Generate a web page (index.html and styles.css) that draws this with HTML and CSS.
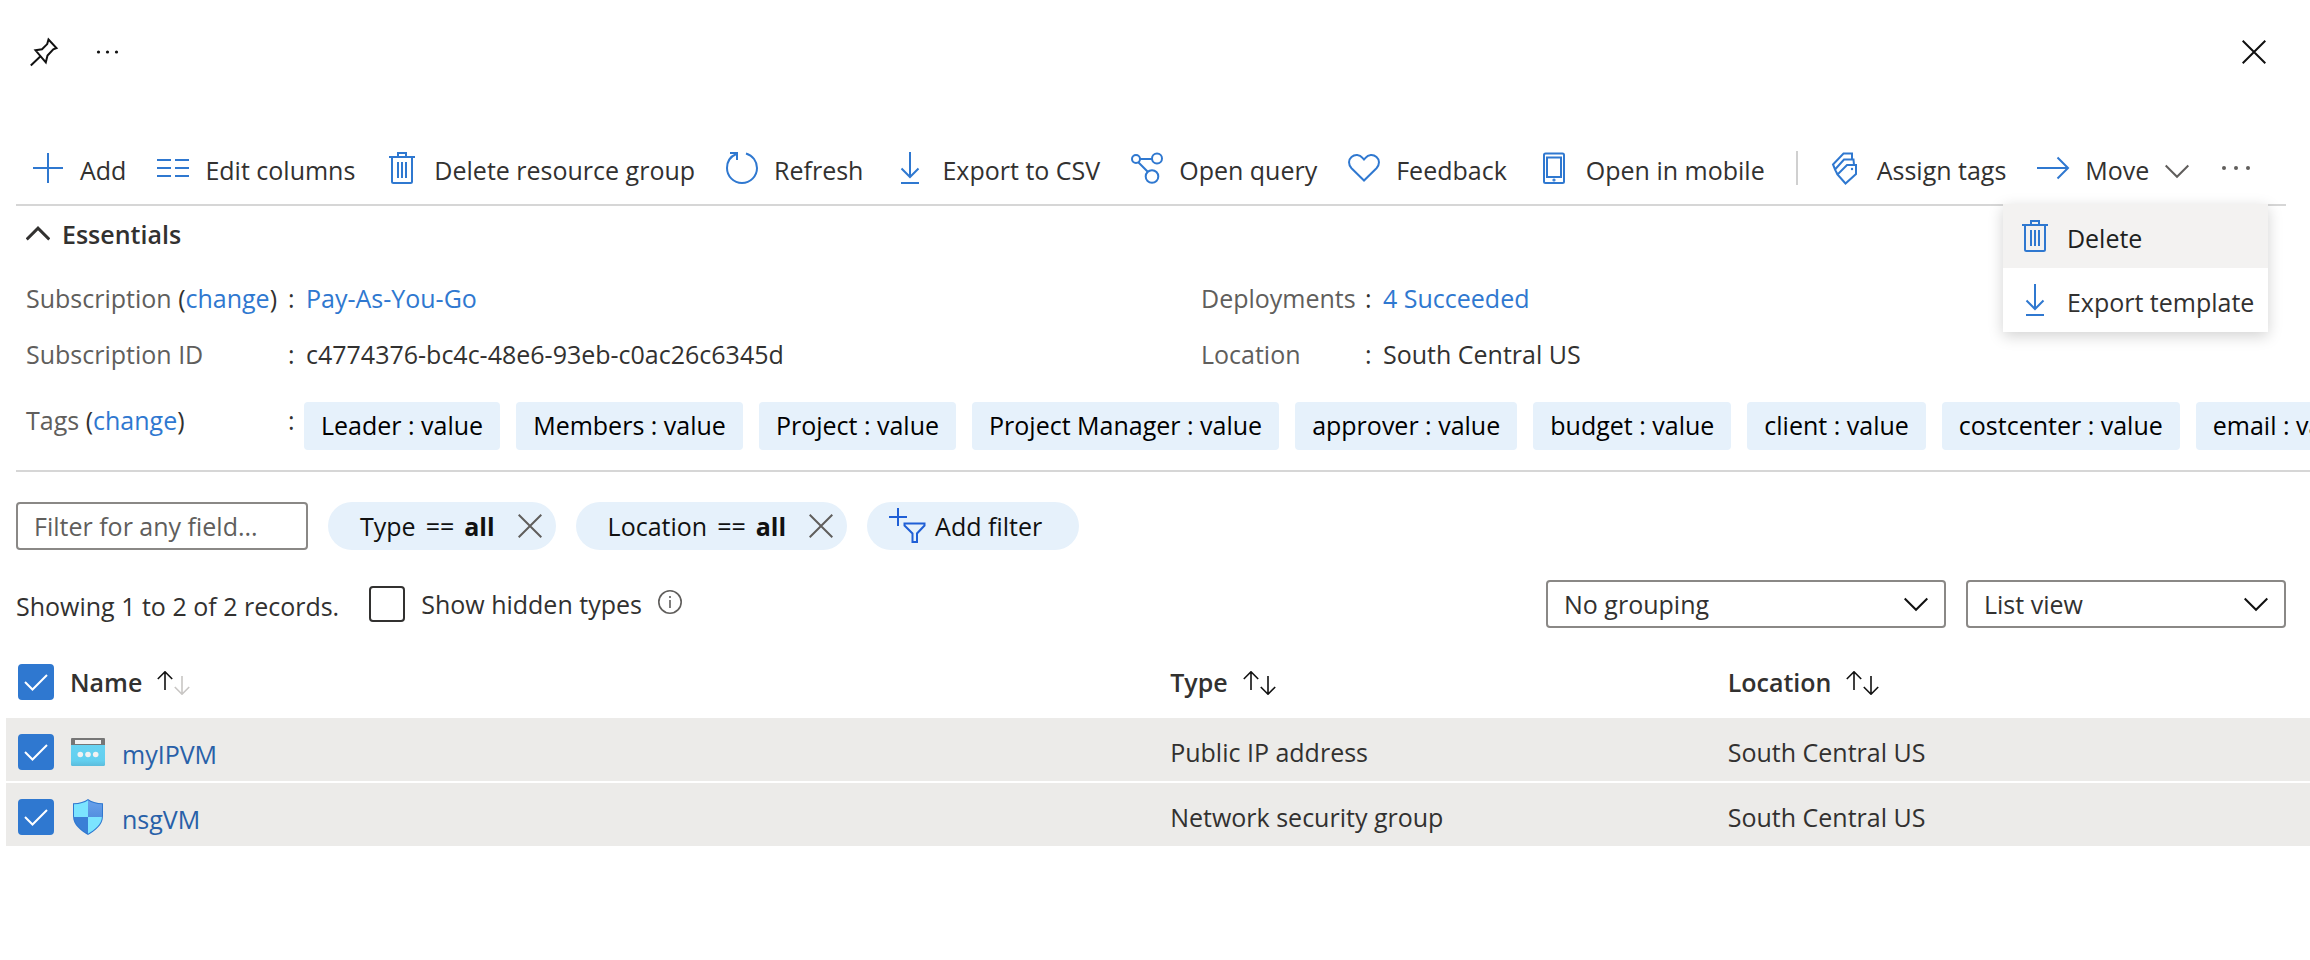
FILE: index.html
```html
<!DOCTYPE html>
<html lang="en">
<head>
<meta charset="utf-8">
<title>Resource group</title>
<link rel="stylesheet" href="styles.css">
</head>
<body>
<svg class="defs" aria-hidden="true">
  <symbol id="i-trash" viewBox="0 0 32 32"><path d="M3 5h26M12 5V1h8v4M6 5v24.500q0 1.500 1.500 1.500h17q1.500 0 1.500-1.500V5M12 10v16M16 10v16M20 10v16"/></symbol>
  <symbol id="i-download" viewBox="0 0 32 32"><path d="M16 0v25M7.500 16.500L16 25l8.500-8.500M7 31h18"/></symbol>
  <symbol id="i-x" viewBox="0 0 24 24"><path d="M.700.700l22.600 22.600M23.300.700L.700 23.300"/></symbol>
  <symbol id="i-chevron" viewBox="0 0 24 24"><path d="M.700 6.500L12 17.800 23.300 6.500"/></symbol>
  <symbol id="i-up" viewBox="0 0 16 24"><path d="M8 0.700v18.300M.800 8L8 .800 15.200 8"/></symbol>
  <symbol id="i-down" viewBox="0 0 16 24"><path d="M8 5v18.300M.800 16L8 23.200l7.200-7.200"/></symbol>
</svg>

<header class="blade-head">
  <button class="plain" aria-label="Pin">
    <svg class="icon28 dark" viewBox="0 0 28 28"><path d="M18.500 1.500l8 8.500-3.200 1.300-5.800 6.200-1.700 6.800-10.300-12 6.500-1 5.200-5.200zM10.500 18.300L.800 27.500"/></svg>
  </button>
  <button class="plain dots" aria-label="More">
    <svg class="icon28 dots-s" viewBox="0 0 28 28"><circle cx="4.500" cy="14" r="1.600"/><circle cx="13.500" cy="14" r="1.600"/><circle cx="22.500" cy="14" r="1.600"/></svg>
  </button>
  <button class="plain close" aria-label="Close"><svg class="icon24 dark"><use href="#i-x"/></svg></button>
</header>

<nav class="toolbar" aria-label="Commands">
  <button class="cmd"><svg class="icon32" viewBox="0 0 32 32"><path d="M16 1v30M1 16h30"/></svg><span>Add</span></button>
  <button class="cmd"><svg class="icon32" viewBox="0 0 32 32"><path d="M0 8h14M18 8h14M0 16h14M18 16h14M0 24h14M18 24h14"/></svg><span>Edit columns</span></button>
  <button class="cmd"><svg class="icon32"><use href="#i-trash"/></svg><span>Delete resource group</span></button>
  <button class="cmd"><svg class="icon32" viewBox="0 0 32 32"><path d="M10.300 2C4.500 4.500 1 9.800 1 16a15 15 0 1 0 30 0C31 9.300 26.800 3.500 20 1.500M4 1h7v7"/></svg><span>Refresh</span></button>
  <button class="cmd"><svg class="icon32"><use href="#i-download"/></svg><span>Export to CSV</span></button>
  <button class="cmd"><svg class="icon32" viewBox="0 0 32 32"><circle cx="5" cy="7" r="4"/><circle cx="26" cy="6.500" r="5"/><circle cx="21" cy="24.500" r="6.300"/><path d="M9 7h12M7.300 10.300L17 20"/></svg><span>Open query</span></button>
  <button class="cmd"><svg class="icon32" viewBox="0 0 32 32"><path d="M16 28.500L3.500 16.200C.200 12.700.200 7.800 3.500 5c3.400-3 8.200-2.600 11 .800L16 7.500l1.500-1.700C20.300 2.400 25.100 2 28.500 5c3.300 2.800 3.300 7.700 0 11.200z"/></svg><span>Feedback</span></button>
  <button class="cmd"><svg class="icon32" viewBox="0 0 32 32"><rect x="6" y="1.500" width="20" height="29.500" rx="1.500"/><path d="M9 5.500h14v19.500H9z"/><circle cx="16" cy="28" r=".6"/></svg><span>Open in mobile</span></button>
  <span class="divider"></span>
  <button class="cmd"><svg class="icon32" viewBox="0 0 32 32"><path d="M27 13v9L16.500 31.500 8.500 22.500 18 13zM8.500 22.500L6 17.500 15 7.500h9.500l.500 5.500M6.500 18.500L4 12.500 14.500 1.500H23v6"/><circle class="solid" cx="23" cy="17" r="1.200"/></svg><span>Assign tags</span></button>
  <button class="cmd"><svg class="icon32" viewBox="0 0 32 32"><path d="M0 16h31M20.500 5.500L31 16 20.500 26.500"/></svg><span>Move</span><svg class="icon24 thin caret"><use href="#i-chevron"/></svg></button>
  <div class="overflow">
    <button class="plain" aria-label="More commands" aria-expanded="true">
      <svg class="icon32 dots-l" viewBox="0 0 32 32"><circle cx="4" cy="16" r="2"/><circle cx="16" cy="16" r="2"/><circle cx="28" cy="16" r="2"/></svg>
    </button>
    <div class="menu" role="menu">
      <button class="menu-item hot" role="menuitem"><svg class="icon32"><use href="#i-trash"/></svg><span>Delete</span></button>
      <button class="menu-item" role="menuitem"><svg class="icon32"><use href="#i-download"/></svg><span>Export template</span></button>
    </div>
  </div>
</nav>

<section class="essentials">
  <h2><button class="toggle" aria-expanded="true"><svg class="icon24 heavy flip"><use href="#i-chevron"/></svg><span>Essentials</span></button></h2>
  <div class="props">
    <dl class="left">
      <dt>Subscription <span class="paren">(<a href="#">change</a>)</span></dt><dd><a href="#">Pay-As-You-Go</a></dd>
      <dt>Subscription ID</dt><dd>c4774376-bc4c-48e6-93eb-c0ac26c6345d</dd>
    </dl>
    <dl class="right">
      <dt>Deployments</dt><dd><a href="#">4 Succeeded</a></dd>
      <dt>Location</dt><dd>South Central US</dd>
    </dl>
  </div>
  <div class="tags">
    <span class="tags-label">Tags <span class="paren">(<a href="#">change</a>)</span></span>
    <ul class="tag-list">
      <li>Leader : value</li><li>Members : value</li><li>Project : value</li><li>Project Manager : value</li><li>approver : value</li><li>budget : value</li><li>client : value</li><li>costcenter : value</li><li>email : value</li>
    </ul>
  </div>
</section>

<main>
  <div class="filters">
    <input class="search" type="text" placeholder="Filter for any field..." aria-label="Filter for any field">
    <span class="pill"><span class="expr"><span>Type</span><span>==</span><b>all</b></span><button class="plain" aria-label="Remove type filter"><svg class="icon24 thin"><use href="#i-x"/></svg></button></span>
    <span class="pill"><span class="expr"><span>Location</span><span>==</span><b>all</b></span><button class="plain" aria-label="Remove location filter"><svg class="icon24 thin"><use href="#i-x"/></svg></button></span>
    <button class="pill add"><svg class="filter-icon" viewBox="0 0 38 36"><path d="M9 0v18M0 9h18M15.500 15.500h20v2L28 25.500V34h-4.500v-8.500L15.500 17.500z"/></svg><span>Add filter</span></button>
  </div>

  <div class="summary">
    <span class="count">Showing 1 to 2 of 2 records.</span>
    <label class="hidden-types"><input type="checkbox"><span>Show hidden types</span></label>
    <svg class="info" viewBox="0 0 24 24"><circle cx="12" cy="12" r="11.200"/><path d="M12 10v8M12 6v2"/></svg>
    <div class="selects">
      <div class="select wide"><select aria-label="Grouping"><option>No grouping</option></select><svg class="icon24 dark"><use href="#i-chevron"/></svg></div>
      <div class="select"><select aria-label="View"><option>List view</option></select><svg class="icon24 dark"><use href="#i-chevron"/></svg></div>
    </div>
  </div>

  <table>
    <colgroup><col class="c-check"><col class="c-name"><col class="c-type"><col></colgroup>
    <thead>
      <tr>
        <th><input type="checkbox" checked aria-label="Select all"></th>
        <th><span class="sort">Name <span class="arrows"><svg><use href="#i-up"/></svg><svg class="faded"><use href="#i-down"/></svg></span></span></th>
        <th><span class="sort">Type <span class="arrows"><svg><use href="#i-up"/></svg><svg><use href="#i-down"/></svg></span></span></th>
        <th><span class="sort">Location <span class="arrows"><svg><use href="#i-up"/></svg><svg><use href="#i-down"/></svg></span></span></th>
      </tr>
    </thead>
    <tbody>
      <tr>
        <td><input type="checkbox" checked aria-label="Select myIPVM"></td>
        <td><span class="res">
          <svg class="res-icon" viewBox="0 0 36 36">
            <defs><linearGradient id="g-ip" x1="0" y1="1" x2="0" y2="0"><stop offset="0" stop-color="#5cbcdc"/><stop offset=".25" stop-color="#63cfef"/><stop offset="1" stop-color="#68d3f2"/></linearGradient></defs>
            <path fill="url(#g-ip)" d="M1 11h34v19.500q0 1.500-1.500 1.500h-31Q1 32 1 30.500z"/><path fill="#767676" d="M2 4h32q1 0 1 1v6H1V5q0-1 1-1z"/><path fill="#f2f2f2" d="M5 6h26v4H5z"/>
            <circle cx="10.300" cy="20.500" r="2.800" fill="#f2f2f2"/><circle cx="18" cy="20.500" r="2.800" fill="#f2f2f2"/><circle cx="25.700" cy="20.500" r="2.800" fill="#f2f2f2"/>
          </svg><a href="#">myIPVM</a></span></td>
        <td>Public IP address</td>
        <td>South Central US</td>
      </tr>
      <tr>
        <td><input type="checkbox" checked aria-label="Select nsgVM"></td>
        <td><span class="res">
          <svg class="res-icon" viewBox="0 0 36 36">
            <defs><clipPath id="shield"><path d="M18 1.300q5 3.700 14 4V17c0 9-8 14-14 17.700C12 31 4 26 4 17V5.300q9-.300 14-4z"/></clipPath>
            <linearGradient id="g-a" x1="0" y1="0" x2="0" y2="1"><stop offset="0" stop-color="#6ba2ec"/><stop offset="1" stop-color="#5490df"/></linearGradient></defs>
            <path fill="#2f78d0" d="M18 0q5 4 15 4.300V17c0 9.500-8.500 15-15 19C11.500 32 3 26.500 3 17V4.300Q13 4 18 0z"/>
            <g clip-path="url(#shield)"><path fill="#7be4ff" d="M0 0h18v18H0zM18 18h18v18H18z"/><path fill="url(#g-a)" d="M18 0h18v18H18z"/><path fill="#3a7fd6" d="M0 18h18v18H0z"/></g>
          </svg><a href="#">nsgVM</a></span></td>
        <td>Network security group</td>
        <td>South Central US</td>
      </tr>
    </tbody>
  </table>
</main>
</body>
</html>
```
FILE: styles.css
```css
* { box-sizing: border-box; }

body {
  margin: 0;
  background: #fff;
  color: #323130;
  font: 25px/36px "Open Sans", "Noto Sans", sans-serif;
  overflow-x: hidden;
}

.defs { position: absolute; width: 0; height: 0; }

button, input, select { font: inherit; color: inherit; }
button { background: none; border: 0; padding: 0; cursor: pointer; }
a { color: #2f78d0; text-decoration: none; }
h2, dl, dd, ul { margin: 0; padding: 0; }
h2 { font-size: 25px; font-weight: 600; }

svg { display: block; flex: none; fill: none; stroke: #2f78d0; stroke-width: 2; overflow: visible; }
.icon32 { width: 32px; height: 32px; }
.icon28 { width: 28px; height: 28px; }
.icon24 { width: 24px; height: 24px; }
.dark { stroke: #111; stroke-width: 2; }
.thin { stroke: #605e5c; stroke-width: 2; }
.heavy { stroke: #323130; stroke-width: 3; }
.flip { transform: rotate(180deg); }
.dots-s { fill: #111; stroke: none; }
.dots-l { fill: #605e5c; stroke: none; }
.solid { fill: #2f78d0; stroke: none; }

.blade-head { display: flex; align-items: center; gap: 36px; padding: 38px 44px 0 30px; }
.close { margin-left: auto; }

.toolbar {
  display: flex;
  align-items: center;
  gap: 31px;
  height: 74px;
  margin: 66px 24px 0 16px;
  padding-left: 16px;
  border-bottom: 2px solid #d6d6d6;
}
.cmd { display: flex; align-items: center; gap: 16px; white-space: nowrap; }
.cmd span, .menu-item span { padding-top: 4px; }
.caret { margin-top: 6px; }
.divider { width: 2px; height: 34px; background: #d0d0d0; }

.overflow { position: relative; display: flex; align-items: center; height: 100%; }
.menu {
  position: absolute;
  z-index: 1;
  top: 100%;
  right: -16px;
  background: #fff;
  box-shadow: 0 4px 14px rgba(0, 0, 0, .18);
}
.menu-item { display: flex; align-items: center; gap: 16px; width: 100%; height: 64px; padding: 0 14px 0 16px; white-space: nowrap; }
.hot { background: #f3f2f1; color: #201f1e; }

.essentials { padding: 10px 0 20px; margin-left: 16px; border-bottom: 2px solid #d6d6d6; }
.toggle { display: flex; align-items: center; gap: 12px; padding-left: 10px; }
.props { display: grid; grid-template-columns: 1175px 1fr; padding: 28px 0 0 10px; }
dl { display: grid; row-gap: 20px; }
.left { grid-template-columns: 262px 1fr; }
.right { grid-template-columns: 164px 1fr; }
dt, .tags-label { color: #605e5c; }
.paren { color: #323130; }
dd::before, .tag-list::before { content: ":"; display: inline-block; width: 18px; color: #323130; }
.tags { display: flex; padding: 30px 0 0 10px; overflow: hidden; }
.tags-label { flex: none; width: 262px; }
.tag-list { display: flex; gap: 16px; list-style: none; white-space: nowrap; }
.tag-list::before { flex: none; width: 16px; margin-right: -16px; }
.tag-list li { padding: 5px 17px 7px; border-radius: 4px; background: #e6f1fb; color: #000; }

.filters { display: flex; gap: 20px; margin: 30px 16px 0; }
.search { width: 292px; height: 48px; padding: 0 16px; border: 2px solid #8a8886; border-radius: 4px; }
.search::placeholder { color: #605e5c; opacity: 1; }
.pill { display: flex; align-items: center; gap: 23px; height: 48px; padding: 0 14px 0 32px; border-radius: 24px; background: #e6f1fb; color: #111; }
.expr { display: flex; gap: 10px; }
.add { gap: 8px; padding: 0 37px 0 22px; }
.filter-icon { width: 38px; height: 36px; stroke: #1f5fd6; }

.summary { display: flex; align-items: center; margin: 30px 24px 0 16px; }
.count { padding-top: 4px; }
.hidden-types { display: flex; align-items: center; gap: 16px; margin-left: 30px; }
.info { width: 24px; height: 24px; margin: 0 0 4px 16px; stroke: #605e5c; stroke-width: 1.6; }
.selects { display: flex; gap: 20px; margin-left: auto; }
.select { position: relative; width: 320px; }
.wide { width: 400px; }
.select select { width: 100%; height: 48px; padding: 0 16px; border: 2px solid #8a8886; border-radius: 4px; background: #fff; appearance: none; }
.select svg { position: absolute; top: 12px; right: 18px; pointer-events: none; }

input[type="checkbox"] { display: block; flex: none; appearance: none; width: 36px; height: 36px; margin: 0; border: 2px solid #323130; border-radius: 4px; background: #fff; }
input[type="checkbox"]:checked {
  border-color: #2f78d0;
  background: #2f78d0 url("data:image/svg+xml,%3Csvg xmlns='http://www.w3.org/2000/svg' viewBox='0 0 32 32'%3E%3Cpath d='M5 16l7.500 7.500L27 9' fill='none' stroke='white' stroke-width='2'/%3E%3C/svg%3E") center / 32px no-repeat;
}

table { width: calc(100% - 6px); margin: 18px 0 0 6px; border-collapse: collapse; table-layout: fixed; }
.c-check { width: 64px; }
.c-name { width: 47.750%; }
.c-type { width: 24.200%; }
th, td { padding: 0; text-align: left; white-space: nowrap; }
th { height: 72px; font-weight: 600; }
td { height: 64px; padding-top: 4px; }
tr > :first-child { padding-left: 12px; }
tbody tr { background: #ecebe9; }
tbody tr + tr { border-top: 2px solid #fff; }
.sort { display: flex; align-items: center; gap: 15px; }
.arrows { display: flex; gap: 1px; padding-top: 2px; }
.arrows svg { width: 16px; height: 24px; stroke: #111; stroke-width: 1.6; }
.arrows .faded { stroke: #c8c6c4; }
.res { display: flex; align-items: center; gap: 16px; }
.res a { padding-top: 4px; color: #2860a8; }
.res-icon { width: 36px; height: 36px; stroke: none; }
```
